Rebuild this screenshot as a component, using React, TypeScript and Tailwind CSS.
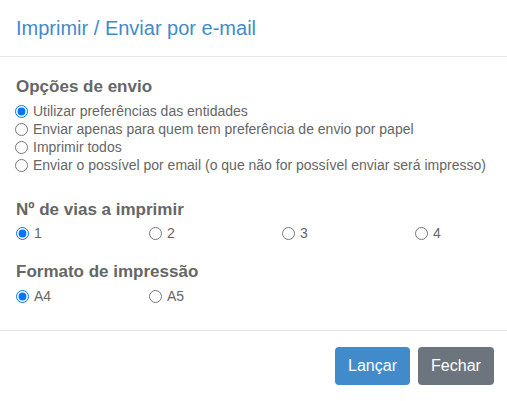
import { useState } from 'react';

const envioOptions = [
  'Utilizar preferências das entidades',
  'Enviar apenas para quem tem preferência de envio por papel',
  'Imprimir todos',
  'Enviar o possível por email (o que não for possível enviar será impresso)',
];

const Radio = ({
  name,
  label,
  checked,
  onChange,
}: {
  name: string;
  label: string;
  checked: boolean;
  onChange: () => void;
}) => (
  <label className="flex items-center h-[18px] leading-[18px] cursor-pointer">
    <input
      type="radio"
      name={name}
      checked={checked}
      onChange={onChange}
      className="m-0 w-[13px] h-[13px] shrink-0 accent-[#0075ff]"
    />
    <span className="ml-[5px] whitespace-nowrap">{label}</span>
  </label>
);

export default function App() {
  const [envio, setEnvio] = useState(0);
  const [vias, setVias] = useState('1');
  const [formato, setFormato] = useState('A4');

  return (
    <div
      className="w-[507px] h-[401px] bg-white text-[14px] text-[#666666] overflow-hidden"
      style={{ fontFamily: '"Liberation Sans", Arial, sans-serif' }}
    >
      <div className="h-[57px] px-[16px] flex items-center border-b border-[#e5e5e5]">
        <h2 className="text-[20px] text-[#428bca] leading-none">Imprimir / Enviar por e-mail</h2>
      </div>

      <div className="px-[15px] pt-[20px] h-[274px] border-b border-[#e5e5e5]">
        <h3 className="text-[17px] font-bold leading-[20px] mb-[5px] pl-px">Opções de envio</h3>
        <div className="flex flex-col">
          {envioOptions.map((opt, i) => (
            <Radio key={opt} name="envio" label={opt} checked={envio === i} onChange={() => setEnvio(i)} />
          ))}
        </div>

        <h3 className="text-[17px] font-bold leading-[20px] mt-[26px] mb-[4px] pl-px">Nº de vias a imprimir</h3>
        <div className="flex">
          {['1', '2', '3', '4'].map((v) => (
            <div key={v} className="w-[133px] shrink-0 pl-px">
              <Radio name="vias" label={v} checked={vias === v} onChange={() => setVias(v)} />
            </div>
          ))}
        </div>

        <h3 className="text-[17px] font-bold leading-[20px] mt-[20px] mb-[5px] pl-px">Formato de impressão</h3>
        <div className="flex">
          {['A4', 'A5'].map((f) => (
            <div key={f} className="w-[133px] shrink-0 pl-px">
              <Radio name="formato" label={f} checked={formato === f} onChange={() => setFormato(f)} />
            </div>
          ))}
        </div>
      </div>

      <div className="flex justify-end gap-[8px] pt-[16px] pr-[13px]">
        <button className="h-[38px] w-[75px] rounded-[4px] bg-[#428bca] text-white text-[16px]">
          Lançar
        </button>
        <button className="h-[38px] w-[76px] rounded-[4px] bg-[#6c757d] text-white text-[16px]">
          Fechar
        </button>
      </div>
    </div>
  );
}
